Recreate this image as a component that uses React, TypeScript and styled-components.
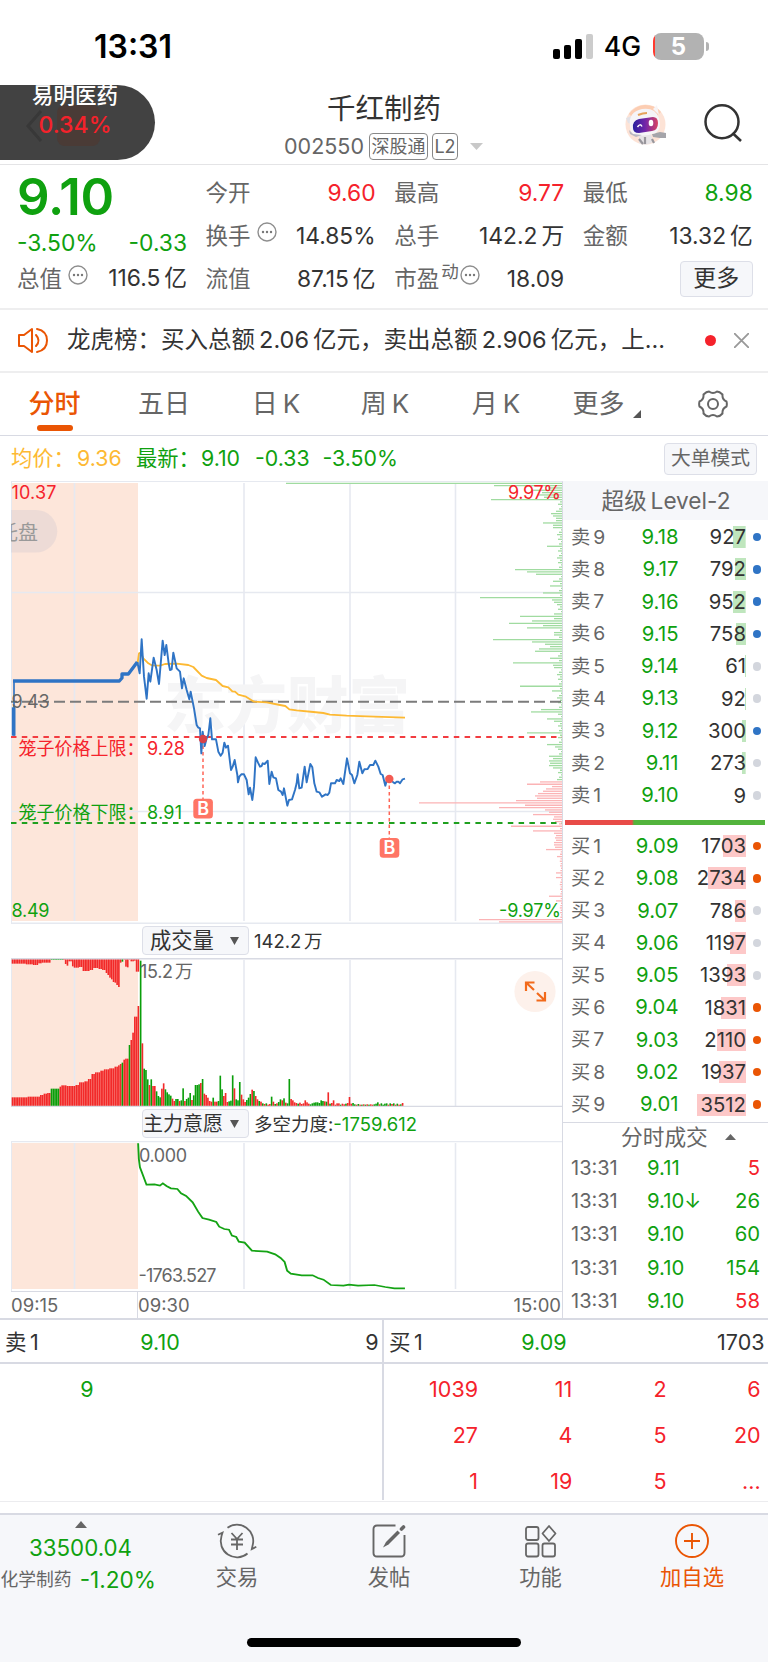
import React from 'react';
import styled, { createGlobalStyle } from 'styled-components';

const C = {
  green: '#0fa10f',
  red: '#f5222b',
  orange: '#ea5504',
  text: '#333333',
  grey: '#666666',
  line: '#d8dae3',
  soft: '#e6e9f0',
  panel: '#f6f7fa',
  blue: '#2f74c5',
  gold: '#fdb933',
};

const Global = createGlobalStyle`
  * { box-sizing: border-box; }
  body {
    margin: 0;
    background: #fff;
    font-family: Inter, "Noto Sans CJK SC", sans-serif;
    line-height: 1.2;
    word-spacing: -2.5px;
    color: ${C.text};
  }
  svg { display: block; flex: none; }
`;

const Screen = styled.div`
  width: 768px;
  height: 1662px;
  display: flex;
  flex-direction: column;
  overflow: hidden;
  background: #fff;
`;

const Txt = styled.span<{ $s: number; $c?: string; $w?: number }>`
  font-size: ${p => p.$s}px;
  color: ${p => p.$c || C.text};
  font-weight: ${p => p.$w || 400};
  white-space: nowrap;
`;

/* status bar */
const StatusBar = styled.div`
  height: 84px;
  padding: 10px 59px 0 94px;
  display: flex;
  align-items: center;
  justify-content: space-between;
`;
const StatusIcons = styled.div`
  display: flex;
  align-items: center;
`;
const Signal = styled.div`
  display: flex;
  align-items: flex-end;
  gap: 4px;
  height: 25px;
  margin-right: 11px;
`;
const SignalBar = styled.i<{ $h: number; $off?: boolean }>`
  width: 7px;
  height: ${p => p.$h}px;
  border-radius: 2px;
  background: ${p => (p.$off ? '#cccccc' : '#000')};
`;
const Battery = styled.div`
  width: 51px;
  height: 27px;
  margin-left: 12px;
  border-radius: 8px;
  background: linear-gradient(90deg, #ff3b30 0 2.5px, #b2b2b2 2.5px);
  display: flex;
  align-items: center;
  justify-content: center;
`;
const BatteryTip = styled.i`
  width: 3px;
  height: 9px;
  margin-left: 2px;
  border-radius: 0 4px 4px 0;
  background: #b2b2b2;
`;

/* header */
const Header = styled.header`
  position: relative;
  height: 81px;
  border-bottom: 1px solid #e4e4e6;
  display: grid;
  grid-template-columns: 284px 1fr 284px;
`;
const FloatPill = styled.div`
  position: absolute;
  left: 0;
  top: 0.5px;
  width: 155px;
  height: 75px;
  border-radius: 0 38px 38px 0;
  background: #424242;
  overflow: hidden;
  display: flex;
  flex-direction: column;
  align-items: center;
  padding-right: 5px;
`;
const PillName = styled.div`
  margin-top: -2px;
  height: 28px;
  font-size: 21.5px;
  line-height: 24.5px;
  font-weight: 500;
  color: #fff;
  z-index: 1;
`;
const PillRate = styled.div`
  height: 28px;
  font-size: 23px;
  line-height: 28px;
  font-weight: 500;
  color: ${C.red};
  z-index: 1;
`;
const PillGhost = styled.svg`
  position: absolute;
  left: 24px;
  top: 18px;
`;
const TitleBlock = styled.div`
  grid-column: 2;
  display: flex;
  flex-direction: column;
  align-items: center;
`;
const Title = styled.h1`
  margin: 4px 0 0;
  font-size: 28.5px;
  line-height: 42px;
  font-weight: 400;
`;
const CodeRow = styled.div`
  width: 200px;
  display: flex;
  align-items: center;
  margin-top: 3px;
  svg { margin-left: 12px; }
`;
const Code = styled.span`
  width: 85px;
  font-size: 21.5px;
  color: ${C.grey};
`;
const Tag = styled.span<{ $w: number }>`
  width: ${p => p.$w}px;
  height: 27px;
  margin-right: 4px;
  border: 1px solid #888;
  border-radius: 4px;
  display: flex;
  flex: none;
  align-items: center;
  justify-content: center;
  font-size: 18px;
  color: ${C.grey};
  white-space: nowrap;
  &:last-of-type { margin-right: 0; }
`;
const HeaderIcons = styled.div`
  display: flex;
  padding: 20px 0 0 140.5px;
  gap: 37.5px;
`;

/* quote */
const Quote = styled.section`
  height: 145px;
  border-bottom: 2px solid #eeeeef;
  padding: 6px 15px 0 17px;
  display: grid;
  grid-template-columns: 170px 170px 170px 170px;
  column-gap: 18.6px;
`;
const QuoteCol = styled.div`
  display: flex;
  flex-direction: column;
`;
const Cell = styled.div<{ $h?: number }>`
  height: ${p => p.$h || 43}px;
  display: flex;
  align-items: center;
  justify-content: space-between;
`;
const Label = styled.span`
  display: flex;
  align-items: center;
  font-size: 22.5px;
  color: ${C.grey};
  white-space: nowrap;
  svg { margin: -7px 0 0 6px; }
  sup { font-size: 17.5px; line-height: 1; margin: -13px 0 0 2px; vertical-align: baseline; }
  sup + svg { margin-left: 1px; }
`;
const Price = styled.div`
  height: 52px;
  padding-top: 2px;
  font-size: 51px;
  line-height: 47px;
  font-weight: 600;
  letter-spacing: -0.3px;
  color: ${C.green};
`;
const Button = styled.button<{ $w: number; $h: number; $s: number; $c?: string }>`
  width: ${p => p.$w}px;
  height: ${p => p.$h}px;
  padding: 0;
  border: 1.5px solid #dddfe8;
  border-radius: 4px;
  background: ${C.panel};
  font-family: inherit;
  font-size: ${p => p.$s}px;
  line-height: 1;
  color: ${p => p.$c || C.text};
  white-space: nowrap;
`;

/* news */
const News = styled.section`
  height: 63px;
  border-bottom: 2px solid #eeeeef;
  display: flex;
  align-items: center;
  justify-content: space-between;
  padding: 0 19px 0 17px;
`;
const NewsText = styled.div`
  width: 620px;
  font-size: 23.5px;
  white-space: nowrap;
`;
const Dot = styled.i<{ $d: number; $c: string }>`
  display: block;
  flex: none;
  width: ${p => p.$d}px;
  height: ${p => p.$d}px;
  border-radius: 50%;
  background: ${p => p.$c};
`;

/* tabs */
const Tabs = styled.nav`
  height: 63px;
  border-bottom: 1.5px solid ${C.line};
  display: grid;
  grid-template-columns: 109px 110px 114px 104px 118px 103px 110px;
  align-items: stretch;
`;
const Tab = styled.div<{ $on?: boolean }>`
  position: relative;
  display: flex;
  align-items: center;
  justify-content: center;
  font-size: 26px;
  color: ${p => (p.$on ? C.orange : C.grey)};
  font-weight: ${p => (p.$on ? 500 : 400)};
  white-space: nowrap;
  &::after {
    content: '';
    position: absolute;
    left: 37px;
    bottom: 4px;
    width: 36px;
    height: 6px;
    border-radius: 3px;
    background: ${p => (p.$on ? C.orange : 'transparent')};
  }
`;
const Corner = styled.svg`
  margin: 20px 0 0 8px;
`;

/* info bar */
const InfoBar = styled.div`
  height: 45px;
  margin-left: 11px;
  padding-right: 11px;
  display: flex;
  align-items: center;
`;
const InfoItem = styled.span<{ $w: number; $c: string }>`
  width: ${p => p.$w}px;
  font-size: 21.3px;
  color: ${p => p.$c};
  white-space: nowrap;
`;

/* main area */
const Main = styled.main`
  height: 839px;
  display: flex;
  border-bottom: 2px solid ${C.line};
`;
const Charts = styled.div`
  width: 552px;
  margin-left: 11px;
  border-top: 1px solid ${C.soft};
  border-right: 1.5px solid ${C.line};
  display: flex;
  flex-direction: column;
`;
const Control = styled.div<{ $h: number }>`
  height: ${p => p.$h}px;
  display: flex;
  align-items: center;
  padding-left: 131px;
`;
const Select = styled.div<{ $pl: number }>`
  width: 107px;
  height: 29px;
  margin-right: 5px;
  padding: 0 9px 0 ${p => p.$pl}px;
  border: 1.5px solid #dddfe8;
  border-radius: 4px;
  background: ${C.panel};
  display: flex;
  align-items: center;
  justify-content: space-between;
  white-space: nowrap;
`;
const Axis = styled.div`
  height: 27px;
  border-top: 1.5px solid ${C.line};
  display: flex;
`;
const AxisPart = styled.div<{ $w: number; $line?: boolean }>`
  width: ${p => p.$w}px;
  padding-right: 1px;
  border-right: ${p => (p.$line ? `1px solid ${C.line}` : 'none')};
  display: flex;
  align-items: center;
  justify-content: space-between;
`;

/* order book */
const Book = styled.aside`
  flex: 1;
  display: flex;
  flex-direction: column;
`;
const BookTitle = styled.div`
  height: 39px;
  padding-left: 1px;
  background: ${C.panel};
  display: flex;
  align-items: center;
  justify-content: center;
`;
const Levels = styled.div`
  height: 292px;
  padding-top: 1px;
`;
const Level = styled.div`
  height: 32.3px;
  display: grid;
  grid-template-columns: 46px 60px 68px 14px;
  align-items: center;
  padding-left: 8px;
  > :nth-child(2) { text-align: right; width: 61.5px; }
`;
const Qty = styled.div<{ $bar: number; $c: string }>`
  height: 22px;
  line-height: 22px;
  width: 68px;
  margin-left: 1px;
  text-align: right;
  font-size: 20.3px;
  background: linear-gradient(${p => p.$c}, ${p => p.$c}) right / ${p => p.$bar}px 100% no-repeat;
`;
const DotCell = styled.div`
  padding-left: 7.5px;
`;
const Ratio = styled.div`
  width: 200px;
  height: 5px;
  margin: 8px 0 4px 2px;
  background: linear-gradient(90deg, #e84b48 0 67px, #53b43c 69px);
`;
const Deals = styled.div`
  margin-top: 1px;
  border-top: 1.5px solid ${C.line};
`;
const DealsTitle = styled.div`
  height: 28px;
  padding-left: 58px;
  display: flex;
  align-items: center;
  gap: 17px;
`;
const Deal = styled.div`
  height: 33.4px;
  display: grid;
  grid-template-columns: 76px 60px 53px;
  align-items: center;
  padding-left: 8px;
  > :last-child { text-align: right; }
`;

/* queue table */
const Queue = styled.section`
  height: 182px;
  border-bottom: 1.5px solid #ececef;
  display: grid;
  grid-template-columns: 384px 384px;
`;
const QueueSide = styled.div<{ $line?: boolean }>`
  height: 180px;
  border-right: ${p => (p.$line ? `2px solid ${C.line}` : 'none')};
`;
const QueueHead = styled.div`
  height: 44px;
  border-bottom: 2px solid ${C.line};
  display: grid;
  grid-template-columns: 111px 88px 1fr;
  align-items: center;
  padding: 3px 3.5px 0 5px;
  > :nth-child(2) { text-align: center; }
  > :last-child { text-align: right; }
`;
const QueueGrid = styled.div<{ $first: number }>`
  display: grid;
  grid-template-columns: ${p => p.$first}px 94.3px 94.3px 94px;
  grid-auto-rows: 46px;
  align-items: center;
  padding-top: 3px;
  text-align: right;
`;

/* bottom navigation */
const Bottom = styled.footer`
  flex: 1;
  margin-top: 11px;
  border-top: 2px solid ${C.line};
  background: ${C.panel};
  display: flex;
  flex-direction: column;
  align-items: center;
`;
const NavRow = styled.div`
  width: 768px;
  height: 123px;
  display: grid;
  grid-template-columns: 161px 152px 152px 151px 152px;
`;
const NavItem = styled.div`
  display: flex;
  flex-direction: column;
  align-items: center;
  padding-top: 8px;
`;
const NavLabel = styled.span<{ $c?: string }>`
  margin-top: 4px;
  font-size: 21.3px;
  line-height: 28px;
  color: ${p => p.$c || C.grey};
`;
const IndexBox = styled.div`
  display: flex;
  flex-direction: column;
  align-items: center;
  padding-top: 6px;
`;
const IndexValue = styled.div`
  margin-top: 7px;
  font-size: 22.3px;
  color: ${C.green};
`;
const IndexRow = styled.div`
  width: 160px;
  margin-top: 4px;
  display: flex;
  align-items: center;
  gap: 8px;
`;
const HomeBar = styled.div`
  width: 274px;
  height: 9px;
  border-radius: 5px;
  background: #000;
`;

const More = () => (
  <svg width="20" height="20" viewBox="0 0 20 20">
    <circle cx="10" cy="10" r="9" fill="none" stroke="#8e8e8e" strokeWidth="1.400" />
    <g fill="#777"><circle cx="6" cy="10" r="1.200" /><circle cx="10" cy="10" r="1.200" /><circle cx="14" cy="10" r="1.200" /></g>
  </svg>
);

const Robot = () => (
  <svg width="42" height="42" viewBox="0 0 42 42">
    <circle cx="20.500" cy="20.500" r="20" fill="#fde3d6" />
    <path d="M4 10A20 20 0 0 1 36 8L30 14H8Z" fill="#fccdb2" />
    <path d="M14 31L26 30L28 38Q20 43 14 39Z" fill="#e6e3e6" />
    <path d="M14 35L18 40M27 35L29 39M20 33V40" stroke="#98969c" strokeWidth="2.200" />
    <path d="M27 30L35 28L41 29V34L35 34L28 33Z" fill="#a5a5aa" />
    <path d="M1 14L7 12L6 20L3 19Z" fill="#e3e1e6" />
    <path d="M28 5L32 1L34 11Z" fill="#f7f4f6" />
    <path d="M5 22Q3 8 17 5Q30 3 34 14Q37 24 31 29Q20 33 10 31Q5 29 5 22Z" fill="#f5f4f7" />
    <path d="M4 26L8 30L17 31L11 33L5 30Z" fill="#b9b8c2" />
    <defs>
      <linearGradient id="visor"><stop offset="0" stopColor="#27219f" /><stop offset=".5" stopColor="#7425a8" /><stop offset="1" stopColor="#d84562" /></linearGradient>
    </defs>
    <path d="M8 24Q7 17 14 15L28 13Q33 13 33 19Q33 26 27 27L14 29Q8 29 8 24Z" fill="url(#visor)" />
    <path d="M12.500 23Q15 19 17 22.500" fill="none" stroke="#fff" strokeWidth="1.500" />
    <ellipse cx="26" cy="19" rx="2.300" ry="3.300" fill="#fff" />
    <path d="M13 11Q18 9 22 9" stroke="#e5a35c" strokeWidth="2.200" fill="none" />
  </svg>
);

const SearchIcon = () => (
  <svg width="38" height="38" viewBox="0 0 38 38" fill="none" stroke="#333" strokeWidth="2.500">
    <circle cx="18" cy="17.800" r="16.500" />
    <path d="M28.500 29L37 37" />
  </svg>
);

const Speaker = () => (
  <svg width="32" height="27" viewBox="0 0 32 27" fill="none" stroke={C.orange} strokeWidth="2" strokeLinejoin="round">
    <path d="M2 8H7L15 2V25L7 19H2Z" />
    <path d="M19 8Q24 13.500 19 19M20 2Q30 4 30 13.500Q30 23 20 25" strokeLinecap="round" />
  </svg>
);

const Gear = () => (
  <svg width="30" height="28" viewBox="0 0 30 28" fill="none" stroke="#666" strokeWidth="2" strokeLinejoin="round">
    <path d="M11 1.500Q15 4.500 19 1.500Q21.500 1.500 24.500 4.500Q24 9.500 28.500 11.500Q29.200 14 28.500 16.500Q24 18.500 24.500 23.500Q22 26.500 19 26.500Q15 23.500 11 26.500Q8 26.500 5.500 23.500Q6 18.500 1.500 16.500Q.8 14 1.500 11.500Q6 9.500 5.500 4.500Q8.500 1.500 11 1.500Z" />
    <circle cx="15" cy="14" r="5" />
  </svg>
);

const GRID_X = [74.5, 244, 350, 455.5];

const Backdrop = ({ top, bottom }: { top: number; bottom: number }) => (
  <>
    <rect x="11" y={top} width="127" height={bottom - top} fill="#fde6da" />
    {GRID_X.map(x => (
      <path key={x} d={`M${x} ${top}V${bottom}`} stroke={C.soft} strokeWidth="1.600" />
    ))}
    <path d={`M11.500 ${top - 2}V${bottom + 2}`} stroke={C.soft} strokeWidth="1" />
  </>
);

const PRICE = '412,126 419,160 425,58 432,170 440,236 446,160 451,185 461,113 470,150 477,192 488,62 494,105 499,75 506,130 510,150 515,148 520,98 530,145 540,155 546,205 551,175 560,210 568,238 572,215 582,265 590,315 594,322 600,325 604,400 608,335 614,378 620,355 625,345 631,295 636,358 648,358 655,395 662,407 668,398 673,368 678,383 684,377 693,450 698,440 704,420 712,465 714,487 718,470 724,463 732,463 740,480 746,523 750,503 757,540 762,500 767,412 774,428 780,440 785,438 788,430 794,432 803,422 808,492 815,455 820,472 828,475 835,510 843,515 848,525 852,505 862,557 867,540 876,538 885,510 890,490 893,463 898,505 905,503 914,440 920,487 931,432 937,442 943,490 950,515 958,517 966,530 977,523 983,525 988,518 993,490 1005,490 1010,480 1018,483 1022,475 1030,492 1041,415 1050,460 1056,465 1063,490 1072,465 1078,425 1087,460 1093,448 1103,447 1110,435 1120,435 1126,422 1135,440 1142,462 1148,465 1156,497 1162,475 1168,478 1180,487 1185,490 1190,485 1195,485 1200,490 1208,478 1215,476';
const AVERAGE = '412,135 417,100 422,98 430,115 445,130 455,136 480,137 495,132 530,131 565,135 580,141 605,167 620,174 648,180 668,198 685,202 697,214 705,215 715,224 738,230 762,245 800,247 840,255 856,258 868,268 890,271 940,276 970,279 990,284 1040,287 1100,289 1215,293';

const PEAKS: Record<number, number> = {
  0: 276, 1: 68, 2: 14, 3: 30, 4: 20, 5: 24, 6: 18, 7: 71, 12: 6, 13: 11, 14: 9, 15: 6, 16: 6, 17: 19, 18: 9, 19: 9, 27: 15,
  37: 47, 38: 35, 39: 26, 42: 9, 44: 12, 47: 19, 49: 82, 50: 10, 51: 8, 56: 8, 57: 42, 58: 8, 59: 30, 60: 53, 61: 19, 62: 35,
  64: 8, 65: 8, 67: 69, 68: 30, 69: 17, 70: 12, 71: 23, 72: 27, 75: 12, 77: 49, 78: 9, 79: 8, 87: 42, 89: 10, 97: 21, 98: 31,
  101: 15, 102: 8, 107: 35, 112: 15, 113: 7, 117: 13, 118: 9, 119: 13, 120: 12, 121: 13, 122: 9, 128: 22, 129: 35, 130: 10,
  131: 16, 132: 19, 133: 24, 134: 27, 135: 25, 136: 46, 137: 143, 138: 37, 139: 63, 140: 17, 141: 13, 142: 29, 143: 8, 144: 9,
  145: 7, 147: 51, 149: 29, 150: 8, 151: 6, 152: 7, 153: 6, 154: 8, 155: 8, 156: 7, 157: 16, 160: 5, 167: 6, 169: 6, 177: 13,
  179: 6, 187: 83, 188: 63,
};
const DEPTH = Array.from({ length: 189 }, (_, i) => PEAKS[i] ?? 1 + ((i * 7) % 5) * (i > 157 ? 0.3 : 1));

const PriceChart = () => (
  <svg width="551" height="442" viewBox="11 482 551 442">
    <Backdrop top={483} bottom={921} />
    <path d="M11 592.500H562M11 811.500H562M11 923.200H562" stroke={C.soft} strokeWidth="1.600" />
    <text x="164" y="728" fontSize="61" fontWeight="900" fill="#f5f5f6" textLength="246" lengthAdjust="spacingAndGlyphs">东方财富</text>
    {DEPTH.map((w, i) => (
      <path key={i} d={`M${562 - w} ${483.3 + i * 2.333}H562`} stroke={i < 128 ? '#a0dba0' : '#fbb3b5'} strokeWidth="1.300" />
    ))}
    <g fill="none" strokeWidth="2">
      <path d="M11 701.800H562" stroke="#7b7b7b" strokeDasharray="11 5" strokeDashoffset="5" />
      <path d="M11 737H562" stroke="#f23c40" strokeDasharray="5.500 5.300" />
      <path d="M11 823H562" stroke="#1fa01f" strokeDasharray="5.500 5.300" />
      <path d="M203 739V799M389.300 779V838" stroke="#ff6455" strokeWidth="1.500" strokeDasharray="3.500 3" />
    </g>
    <g transform="translate(0 620) scale(.33333)" fill="none" strokeLinejoin="round">
      <polyline points={AVERAGE} stroke={C.gold} strokeWidth="5.500" />
      <polyline points={PRICE} stroke={C.blue} strokeWidth="5.800" />
      <path d="M42 183V347" stroke={C.blue} strokeWidth="5" />
      <path d="M41 262V347" stroke={C.blue} strokeWidth="11" />
      <path d="M39 183H358L366 174V162H385L412 126" stroke={C.blue} strokeWidth="10" />
    </g>
    <circle cx="203" cy="739" r="4.200" fill="#d6424a" />
    <circle cx="389.300" cy="779" r="4.200" fill="#f35b52" />
    {[[193.3, 798.7], [379.7, 838]].map(([x, y]) => (
      <g key={x}>
        <rect x={x} y={y} width="19.600" height="19.800" rx="3.500" fill="#ff7565" />
        <text x={x + 9.8} y={y + 16.3} fontSize="18" fontWeight="600" fill="#fff" textAnchor="middle">B</text>
      </g>
    ))}
    <path d="M11 510H36A21.300 21.300 0 0 1 36 552.600H11Z" fill="#c9c4cc" fillOpacity=".3" />
    <text x="-2" y="539.500" fontSize="20" fill="#999">托盘</text>
    <g fontSize="18">
      <text x="11.500" y="499" fill={C.red} textLength="45">10.37</text>
      <text x="561" y="499" fill={C.red} textAnchor="end" textLength="53">9.97%</text>
      <text x="11.500" y="707.800" fill={C.grey} textLength="38">9.43</text>
      <text x="11.500" y="916.500" fill={C.green} textLength="38">8.49</text>
      <text x="561" y="916.500" fill={C.green} textAnchor="end" textLength="62">-9.97%</text>
      <text x="18.500" y="754.500" fill={C.red}>笼子价格上限：</text>
      <text x="147" y="754.500" fill={C.red} textLength="38">9.28</text>
      <text x="18.500" y="819" fill={C.green}>笼子价格下限：</text>
      <text x="147" y="819" fill={C.green} textLength="35">8.91</text>
    </g>
  </svg>
);

type Pt = [number, number];
const at = (pts: Pt[], x: number) => {
  let v = pts[0][1];
  for (const [px, py] of pts) if (px <= x) v = py;
  return v;
};
const RISE: Pt[] = [[36, 532], [80, 530], [116, 525], [127, 521], [138, 519], [149, 506], [178, 500], [184, 496], [196, 498], [225, 495], [238, 487], [250, 484], [260, 477], [272, 462], [284, 457], [298, 452], [308, 448], [325, 445], [340, 440], [350, 436], [358, 432], [364, 428], [370, 419], [376, 416], [382, 392], [387, 375], [392, 360], [397, 338], [403, 290], [409, 258], [414, 472]];
const FALL: Pt[] = [[36, 131], [78, 133], [98, 135], [114, 130], [125, 128], [149, 120], [186, 120], [191, 132], [197, 137], [202, 124], [212, 139], [218, 143], [238, 141], [244, 153], [270, 150], [276, 144], [292, 147], [305, 150], [313, 159], [320, 165], [326, 173], [332, 178], [337, 186], [342, 188], [347, 195], [353, 201], [358, 128], [363, 125], [370, 119], [375, 140], [380, 142], [386, 119], [392, 124], [398, 122], [408, 155], [414, 117]];
const AUCTION = Array.from({ length: 72 }, (_, i) => 35 + i * 5.32);
const TRADES = '122g 370r 446g 450g 478g 495r 478g 498r 498r 514g 528g 532g 506r 490r 508g 517g 523g 527g 536r 543r 537g 537g 543r 541g 505g 543r 537g 533g 519g 540r 526g 495g 495g 493g 489r 477g 521r 525r 533r 543r 545r 533g 545r 545r 543g 467g 508g 528r 519r 546r 544g 542g 466g 505r 538g 541g 486g 524r 538r 546r 540g 533g 522g 509r 513g 528r 538r 543g 545r 550g 552r 550g 554r 552r 530g 545r 552g 550r 546g 538g 541r 535g 548r 550g 477g 537r 541r 547r 549r 551g 548r 552r 550r 541r 547r 551r 553g 550g 548g 547g 547g 549g 541g 543g 544r 545g 517r 551g 549r 541r 554r 550r 550r 554g 551r 553r 551g 549r 531r 551r 549g 553g 554r 552g 554r 554g 553r 554g 553r 554g 553r 554r 553g 551g 547g 553r 550g 554g 551g 550g 554r 550g 552r 550g 554r 551g 554r 553g 549r'.split(' ');

const VolumeChart = () => (
  <svg width="551" height="149" viewBox="11 958 551 149">
    <Backdrop top={960} bottom={1106} />
    <g transform="translate(0 920) scale(.33333)">
      {AUCTION.map((x, i) => {
        const up = (x > 148 && x < 178) || (x > 361 && x < 367) || (x > 385 && x < 391);
        const top = (x > 148 && x < 186) || (x > 361 && x < 369);
        const y = at(RISE, x + 1);
        return (
          <g key={i}>
            <rect x={x} y={y} width="4.900" height={558 - y} fill={up ? '#0a9e0a' : '#f22929'} />
            <rect x={x} y="117" width="4.900" height={at(FALL, x + 1) - 117} fill={top ? '#0a9e0a' : '#f22929'} />
          </g>
        );
      })}
      {TRADES.map((t, i) => {
        const y = parseInt(t, 10);
        return <rect key={i} x={419.5 + i * 5.31} y={y} width="4.900" height={558 - y} fill={t.endsWith('g') ? '#0a9e0a' : '#f22929'} />;
      })}
    </g>
    <path d="M11 958.700H562M11 1106.500H562" stroke={C.line} strokeWidth="1.400" />
    <text x="140" y="978" fontSize="18" fill={C.grey} textLength="53">15.2 万</text>
    <circle cx="535" cy="991.500" r="20.600" fill="#fdf1eb" />
    <g fill="none" stroke="#f26a1b" strokeWidth="2.200">
      <path d="M534.500 982.500H526V991M526 982.500L534 990" />
      <path d="M536.500 1000.500H545V992M545 1000.500L537 993" />
    </g>
  </svg>
);

const FORCE = '380,133 382,180 385,205 392,225 403,257 425,256 440,260 448,253 458,261 470,268 488,270 498,283 512,291 530,310 545,338 557,357 575,362 595,369 603,383 617,390 630,392 638,410 650,414 657,428 673,431 693,455 735,458 757,466 772,477 783,489 790,515 800,524 830,529 860,529 875,537 890,542 910,558 945,560 960,557 985,560 1030,558 1060,564 1085,568 1114,568';

const ForceChart = () => (
  <svg width="551" height="150" viewBox="11 1142 551 150">
    <path d="M11 1142.600H562" stroke={C.soft} strokeWidth="1.400" />
    <Backdrop top={1144} bottom={1290} />
    <g fontSize="18" fill={C.grey}>
      <text x="139" y="1162.500" textLength="48">0.000</text>
      <text x="138.500" y="1283" textLength="78">-1763.527</text>
    </g>
    <g transform="translate(0 1100) scale(.3635 .33333)">
      <polyline points={FORCE} fill="none" stroke="#14a314" strokeWidth="5.200" />
    </g>
  </svg>
);

type Row = [string, string, string, number, string];
const SELLS: Row[] = [
  ['9', '9.18', '927', 12.7, C.blue], ['8', '9.17', '792', 11, C.blue], ['7', '9.16', '952', 12.7, C.blue],
  ['6', '9.15', '758', 10.3, C.blue], ['5', '9.14', '61', 1, '#d3d6dd'], ['4', '9.13', '92', 1, '#d3d6dd'],
  ['3', '9.12', '300', 4, C.blue], ['2', '9.11', '273', 3.7, '#d3d6dd'], ['1', '9.10', '9', 0, '#d3d6dd'],
];
const BUYS: Row[] = [
  ['1', '9.09', '1703', 23.5, C.orange], ['2', '9.08', '2734', 38, C.orange], ['3', '9.07', '786', 11, '#d3d6dd'],
  ['4', '9.06', '1197', 16.5, '#d3d6dd'], ['5', '9.05', '1393', 19.3, '#d3d6dd'], ['6', '9.04', '1831', 25.3, C.orange],
  ['7', '9.03', '2110', 29.3, C.orange], ['8', '9.02', '1937', 27, C.orange], ['9', '9.01', '3512', 49, C.orange],
];
const DEALS = [['9.11', '5', C.red], ['9.10↓', '26', C.green], ['9.10', '60', C.green], ['9.10', '154', C.green], ['9.10', '58', C.red]];

const LevelRows = ({ side, rows, bar }: { side: string; rows: Row[]; bar: string }) => (
  <Levels>
    {rows.map(([n, price, qty, w, dot]) => (
      <Level key={n}>
        <Txt $s={19.3} $c={C.grey}>{side} {n}</Txt>
        <Txt $s={20.3} $c={C.green}>{price}</Txt>
        <Qty $bar={w} $c={bar}>{qty}</Qty>
        <DotCell><Dot $d={8.5} $c={dot} /></DotCell>
      </Level>
    ))}
  </Levels>
);

export default function App() {
  return (
    <Screen>
      <Global />
      <StatusBar>
        <Txt $s={32} $w={600} $c="#000">13:31</Txt>
        <StatusIcons>
          <Signal><SignalBar $h={10} /><SignalBar $h={14} /><SignalBar $h={20} /><SignalBar $h={25} $off /></Signal>
          <Txt $s={26.5} $w={500} $c="#000">4G</Txt>
          <Battery><Txt $s={24} $w={700} $c="#fff">5</Txt></Battery>
          <BatteryTip />
        </StatusIcons>
      </StatusBar>

      <Header>
        <FloatPill>
          <PillGhost width="80" height="46" viewBox="0 0 80 46">
            <path d="M17 8L4 23L17 38" fill="none" stroke="#383838" strokeWidth="3" />
            <rect x="33" y="2" width="43" height="41" rx="8" fill="#4a3b36" />
          </PillGhost>
          <PillName>易明医药</PillName>
          <PillRate>0.34%</PillRate>
        </FloatPill>
        <TitleBlock>
          <Title>千红制药</Title>
          <CodeRow>
            <Code>002550</Code>
            <Tag $w={59}>深股通</Tag>
            <Tag $w={26}>L2</Tag>
            <svg width="13" height="8"><path d="M0 0H13L6.500 7Z" fill="#c8c8c8" /></svg>
          </CodeRow>
        </TitleBlock>
        <HeaderIcons><Robot /><SearchIcon /></HeaderIcons>
      </Header>

      <Quote>
        <QuoteCol>
          <Price>9.10</Price>
          <Cell $h={39}><Txt $s={22.8} $c={C.green}>-3.50%</Txt><Txt $s={22.8} $c={C.green}>-0.33</Txt></Cell>
          <Cell $h={32}><Label>总值<More /></Label><Txt $s={22.8}>116.5 亿</Txt></Cell>
        </QuoteCol>
        <QuoteCol>
          <Cell><Label>今开</Label><Txt $s={22.8} $c={C.red}>9.60</Txt></Cell>
          <Cell><Label>换手<More /></Label><Txt $s={22.8}>14.85%</Txt></Cell>
          <Cell><Label>流值</Label><Txt $s={22.8}>87.15 亿</Txt></Cell>
        </QuoteCol>
        <QuoteCol>
          <Cell><Label>最高</Label><Txt $s={22.8} $c={C.red}>9.77</Txt></Cell>
          <Cell><Label>总手</Label><Txt $s={22.8}>142.2 万</Txt></Cell>
          <Cell><Label>市盈<sup>动</sup><More /></Label><Txt $s={22.8}>18.09</Txt></Cell>
        </QuoteCol>
        <QuoteCol>
          <Cell><Label>最低</Label><Txt $s={22.8} $c={C.green}>8.98</Txt></Cell>
          <Cell><Label>金额</Label><Txt $s={22.8}>13.32 亿</Txt></Cell>
          <Cell><span /><Button $w={73} $h={36} $s={23}>更多</Button></Cell>
        </QuoteCol>
      </Quote>

      <News>
        <Speaker />
        <NewsText>龙虎榜：买入总额 2.06 亿元，卖出总额 2.906 亿元，上...</NewsText>
        <Dot $d={11} $c={C.red} />
        <svg width="15" height="15" viewBox="0 0 14 14"><path d="M0 0L14 14M14 0L0 14" stroke="#999" strokeWidth="1.700" /></svg>
      </News>

      <Tabs>
        <Tab $on>分时</Tab><Tab>五日</Tab><Tab>日 K</Tab><Tab>周 K</Tab><Tab>月 K</Tab>
        <Tab>更多<Corner width="8" height="8"><path d="M8 0V8H0Z" fill="#555" /></Corner></Tab>
        <Tab><Gear /></Tab>
      </Tabs>

      <InfoBar>
        <InfoItem $w={66} $c={C.gold}>均价：</InfoItem>
        <InfoItem $w={59} $c={C.gold}>9.36</InfoItem>
        <InfoItem $w={65} $c={C.green}>最新：</InfoItem>
        <InfoItem $w={54} $c={C.green}>9.10</InfoItem>
        <InfoItem $w={67.5} $c={C.green}>-0.33</InfoItem>
        <InfoItem $w={341.5} $c={C.green}>-3.50%</InfoItem>
        <Button $w={93} $h={32} $s={19.8} $c={C.grey}>大单模式</Button>
      </InfoBar>

      <Main>
        <Charts>
          <PriceChart />
          <Control $h={34}>
            <Select $pl={7}>
              <Txt $s={21.3}>成交量</Txt>
              <svg width="9" height="8"><path d="M0 0H9L4.500 8Z" fill="#555" /></svg>
            </Select>
            <Txt $s={18.5}>142.2 万</Txt>
          </Control>
          <VolumeChart />
          <Control $h={35}>
            <Select $pl={0}>
              <Txt $s={20}>主力意愿</Txt>
              <svg width="9" height="8"><path d="M0 0H9L4.500 8Z" fill="#555" /></svg>
            </Select>
            <Txt $s={18.5}>多空力度:</Txt><Txt $s={18.5} $c={C.green}>-1759.612</Txt>
          </Control>
          <ForceChart />
          <Axis>
            <AxisPart $w={127} $line><Txt $s={18.5} $c={C.grey}>09:15</Txt></AxisPart>
            <AxisPart $w={424}><Txt $s={18.5} $c={C.grey}>09:30</Txt><Txt $s={18.5} $c={C.grey}>15:00</Txt></AxisPart>
          </Axis>
        </Charts>
        <Book>
          <BookTitle><Txt $s={22.6} $c={C.grey}>超级 Level-2</Txt></BookTitle>
          <LevelRows side="卖" rows={SELLS} bar="#bfe6bd" />
          <Ratio />
          <LevelRows side="买" rows={BUYS} bar="#fdc8c8" />
          <Deals>
            <DealsTitle>
              <Txt $s={21.7} $c={C.grey}>分时成交</Txt>
              <svg width="11" height="6"><path d="M0 6H11L5.500 0Z" fill="#666" /></svg>
            </DealsTitle>
            {DEALS.map(([price, qty, color], i) => (
              <Deal key={i}>
                <Txt $s={20} $c={C.grey}>13:31</Txt>
                <Txt $s={20.3} $c={C.green}>{price}</Txt>
                <Txt $s={20.3} $c={color}>{qty}</Txt>
              </Deal>
            ))}
          </Deals>
        </Book>
      </Main>

      <Queue>
        <QueueSide $line>
          <QueueHead><Txt $s={21.5}>卖 1</Txt><Txt $s={21.5} $c={C.green}>9.10</Txt><Txt $s={21.5}>9</Txt></QueueHead>
          <QueueGrid $first={93.5}><Txt $s={21.5} $c={C.green}>9</Txt></QueueGrid>
        </QueueSide>
        <QueueSide>
          <QueueHead><Txt $s={21.5}>买 1</Txt><Txt $s={21.5} $c={C.green}>9.09</Txt><Txt $s={21.5}>1703</Txt></QueueHead>
          <QueueGrid $first={94}>
            {['1039', '11', '2', '6', '27', '4', '5', '20', '1', '19', '5', '...'].map((n, i) => (
              <Txt key={i} $s={21.5} $c={C.red}>{n}</Txt>
            ))}
          </QueueGrid>
        </QueueSide>
      </Queue>

      <Bottom>
        <NavRow>
          <IndexBox>
            <svg width="12" height="7"><path d="M0 7H12L6 0Z" fill="#666" /></svg>
            <IndexValue>33500.04</IndexValue>
            <IndexRow><Txt $s={17.8} $c={C.grey}>化学制药</Txt><Txt $s={22.6} $c={C.green}>-1.20%</Txt></IndexRow>
          </IndexBox>
          <NavItem>
            <svg width="40" height="36" viewBox="0 0 40 36" fill="none" stroke="#666" strokeWidth="1.800">
              <path d="M10.500 4.700A16.300 16.300 0 0 1 35.600 22.500L34.800 26L39.300 23.800" />
              <path d="M30.500 30.500A16.300 16.300 0 0 1 4.500 13L5.500 9.700L1 11.800" />
              <path d="M14.500 10L20 16L25.500 10M14 16.500H26M14 21.500H26M20 16V27" />
            </svg>
            <NavLabel>交易</NavLabel>
          </NavItem>
          <NavItem>
            <svg width="34" height="36" viewBox="0 0 34 36" fill="none" stroke="#666" strokeWidth="1.900">
              <path d="M23.500 2.500H5Q1.500 2.500 1.500 6V30Q1.500 33.500 5 33.500H29Q32.500 33.500 32.500 30V12" />
              <path d="M11 24.500L14 19L25.500 7.500L28 10L16.500 21.500Z" fill="#666" stroke="none" />
              <path d="M29.500 6L31.500 4" strokeWidth="3.600" strokeLinecap="round" />
            </svg>
            <NavLabel>发帖</NavLabel>
          </NavItem>
          <NavItem>
            <svg width="34" height="36" viewBox="0 0 34 36" fill="none" stroke="#666" strokeWidth="1.800" strokeLinejoin="round">
              <rect x="2" y="4" width="12.500" height="13" rx="2" />
              <path d="M25 3L31.500 10.500L25 18L18.500 10.500Z" />
              <rect x="2" y="20.500" width="12.500" height="13" rx="2" />
              <rect x="18.500" y="20.500" width="12.500" height="13" rx="2" />
            </svg>
            <NavLabel>功能</NavLabel>
          </NavItem>
          <NavItem>
            <svg width="36" height="36" viewBox="0 0 36 36" fill="none" stroke={C.orange} strokeWidth="1.900">
              <circle cx="18" cy="18" r="16" /><path d="M10 18H26M18 10V26" />
            </svg>
            <NavLabel $c={C.orange}>加自选</NavLabel>
          </NavItem>
        </NavRow>
        <HomeBar />
      </Bottom>
    </Screen>
  );
}
